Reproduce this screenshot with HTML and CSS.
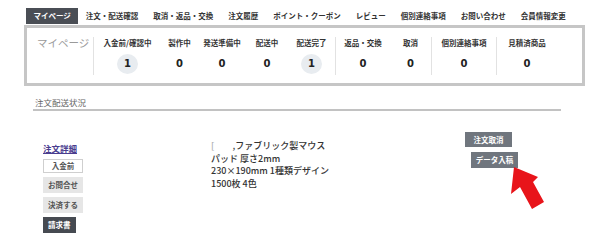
FILE: index.html
```html
<!DOCTYPE html>
<html lang="ja">
<head>
    <meta charset="UTF-8">
    <meta name="viewport" content="width=device-width, initial-scale=1.0">
    <title>マイページ</title>
    <link rel="stylesheet" href="styles.css">
</head>
<body>
    <div class="page">
        <nav class="tabs">
            <span class="tab active">マイページ</span>
            <span class="tab">注文・配送確認</span>
            <span class="tab">取消・返品・交換</span>
            <span class="tab">注文履歴</span>
            <span class="tab">ポイント・クーポン</span>
            <span class="tab">レビュー</span>
            <span class="tab">個別連絡事項</span>
            <span class="tab">お問い合わせ</span>
            <span class="tab">会員情報変更</span>
        </nav>

        <div class="summary">
            <div class="summary-title">マイページ</div>
            <div class="group">
                <div class="stat w67"><div class="stat-name">入金前/確認中</div><div class="stat-num badge">1</div></div>
                <div class="stat w37"><div class="stat-name">製作中</div><div class="stat-num">0</div></div>
                <div class="stat w48"><div class="stat-name">発送準備中</div><div class="stat-num">0</div></div>
                <div class="stat w42"><div class="stat-name">配送中</div><div class="stat-num">0</div></div>
                <div class="stat w47"><div class="stat-name">配送完了</div><div class="stat-num badge">1</div></div>
            </div>
            <div class="group">
                <div class="stat w54"><div class="stat-name">返品・交換</div><div class="stat-num">0</div></div>
                <div class="stat w41"><div class="stat-name">取消</div><div class="stat-num">0</div></div>
            </div>
            <div class="group">
                <div class="stat w64"><div class="stat-name">個別連絡事項</div><div class="stat-num">0</div></div>
            </div>
            <div class="group">
                <div class="stat w60"><div class="stat-name">見積済商品</div><div class="stat-num">0</div></div>
            </div>
        </div>

        <div class="orders">
            <div class="orders-title">注文配送状況</div>
            <div class="order">
                <div class="order-side">
                    <a class="detail-link">注文詳細</a>
                    <div class="status-btns">
                        <span class="btn btn-status">入金前</span>
                        <span class="btn btn-light">お問合せ</span>
                        <span class="btn btn-light">決済する</span>
                        <span class="btn btn-dark">請求書</span>
                    </div>
                </div>
                <div class="order-desc">
                    <div><span class="bracket">[</span>&nbsp;&nbsp;&nbsp;&nbsp;&nbsp;&nbsp;&nbsp;&nbsp;&nbsp;,ファブリック製マウス</div>
                    <div>パッド 厚さ2mm</div>
                    <div>230×190mm 1種類デザイン</div>
                    <div>1500枚 4色</div>
                </div>
                <div class="order-actions">
                    <span class="btn btn-gray">注文取消</span>
                    <span class="btn btn-gray btn-shift">データ入稿</span>
                </div>
            </div>
        </div>

        <!-- pointer over the upload button -->
        <svg class="arrow" width="45" height="55" viewBox="0 0 45 55">
            <polygon points="9,7 33,17 28,22 39,42 27,49 15,27 6,34" fill="#e8141a"/>
        </svg>
    </div>
</body>
</html>
```

FILE: styles.css
```css
body {
    margin: 0;
    font-family: "Noto Sans CJK JP", sans-serif;
    color: #333;
    background: #fff;
}
.page {
    position: relative;
    width: 598px;
    height: 240px;
}
.tabs {
    display: flex;
    padding: 8px 0 0 26px;
    height: 16px;
}
.tab {
    padding: 0 7.5px;
    font-size: 7.5px;
    line-height: 16px;
    font-weight: bold;
    color: #333;
    white-space: nowrap;
}
.tab.active {
    background: #4a4e55;
    color: #fff;
}
.summary {
    display: flex;
    margin: 1px 0 0 24px;
    width: 555px;
    height: 38px;
    padding: 9px 0 8px;
    border: 3px solid #c6c6c6;
}
.summary-title {
    width: 56px;
    padding-left: 10px;
    font-size: 10.5px;
    line-height: 11px;
    color: #9a9a9a;
    white-space: nowrap;
}
.group {
    display: flex;
    border-left: 1px solid #e2e2e2;
    height: 38px;
}
.stat {
    display: flex;
    flex-direction: column;
    align-items: center;
}
.w37 { width: 37px; }
.w41 { width: 41px; }
.w42 { width: 42px; }
.w47 { width: 47px; }
.w48 { width: 48px; }
.w54 { width: 54px; }
.w60 { width: 60px; }
.w64 { width: 64px; }
.w67 { width: 67px; }
.stat-name {
    font-size: 7.5px;
    line-height: 11px;
    font-weight: bold;
    color: #333;
    white-space: nowrap;
}
.stat-num {
    margin-top: 6px;
    width: 21px;
    height: 20px;
    line-height: 20px;
    text-align: center;
    font-family: "DejaVu Sans", sans-serif;
    font-size: 10px;
    font-weight: bold;
    color: #222;
    border-radius: 50%;
}
.badge {
    background: #e8ecf0;
}
.orders {
    margin: 10px 0 0 33px;
    width: 528px;
}
.orders-title {
    padding: 0 2px 1px;
    font-size: 8.5px;
    line-height: 12px;
    color: #666;
    border-bottom: 2px solid #c2c2c2;
}
.order {
    display: flex;
    margin-top: 21px;
    padding-left: 10px;
}
.order-side {
    width: 168px;
    padding-top: 10px;
}
.detail-link {
    display: block;
    font-size: 8.5px;
    line-height: 12px;
    font-weight: bold;
    color: #4a3d8f;
    text-decoration: underline;
}
.status-btns {
    display: flex;
    flex-direction: column;
    align-items: flex-start;
    gap: 4px;
    margin-top: 5px;
}
.btn {
    padding: 0 5px;
    font-size: 7.5px;
    line-height: 16px;
    font-weight: bold;
    white-space: nowrap;
}
.btn-status {
    width: 40px;
    box-sizing: border-box;
    line-height: 12px;
    text-align: center;
    border: 1px solid #cfcfcf;
    color: #555;
}
.btn-light {
    background: #e6e6e6;
    color: #555;
}
.btn-dark {
    background: #464a51;
    color: #fff;
}
.order-desc {
    width: 254px;
    padding-top: 8px;
    font-size: 9px;
    line-height: 12.5px;
    font-weight: 500;
    color: #333;
}
.bracket {
    color: #aaa;
}
.order-actions {
    display: flex;
    flex-direction: column;
    align-items: flex-start;
    gap: 5px;
}
.btn-gray {
    width: 47px;
    padding: 0;
    line-height: 15px;
    text-align: center;
    background: #70767e;
    color: #fff;
}
.btn-shift {
    margin-left: 6px;
    line-height: 16px;
}
.arrow {
    position: absolute;
    left: 505px;
    top: 160px;
}
```
